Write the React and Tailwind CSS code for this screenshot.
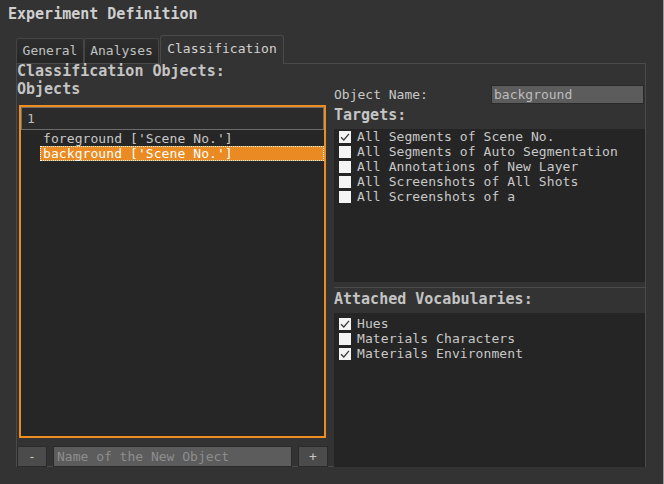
import React, { useState } from "react";

const mono = "font-['DejaVu_Sans_Mono','Liberation_Mono',monospace]";

const targets = [
  { label: "All Segments of Scene No.", checked: true },
  { label: "All Segments of Auto Segmentation", checked: false },
  { label: "All Annotations of New Layer", checked: false },
  { label: "All Screenshots of All Shots", checked: false },
  { label: "All Screenshots of a", checked: false },
];

const vocabularies = [
  { label: "Hues", checked: true },
  { label: "Materials Characters", checked: false },
  { label: "Materials Environment", checked: true },
];

const Check = ({ checked }) => (
  <span className="w-[12px] h-[12px] bg-[#f4f4f4] flex items-center justify-center shrink-0">
    {checked && (
      <svg width="10" height="10" viewBox="0 0 10 10">
        <path d="M1 5.2 L3.8 8 L9 1.8" fill="none" stroke="#3a3a3a" strokeWidth="1.3" />
      </svg>
    )}
  </span>
);

const CheckList = ({ items }) => (
  <div className="flex flex-col">
    {items.map((it) => (
      <div key={it.label} className="h-[15px] flex items-center pl-[5px] gap-[6px] text-[13px] tracking-[0.08px] text-[#c8c8c8]">
        <Check checked={it.checked} />
        <span className="leading-none whitespace-nowrap">{it.label}</span>
      </div>
    ))}
  </div>
);

const App = () => {
  const [tab] = useState("Classification");
  const tabs = [
    { name: "General", w: "w-[68px]" },
    { name: "Analyses", w: "w-[75px]" },
    { name: "Classification", w: "w-[124px]" },
  ];

  return (
    <main className={`w-[664px] h-[484px] bg-[#333333] border-r border-r-[#9a9a9a] flex flex-col overflow-hidden ${mono}`}>
      <div className="h-[28px] flex items-center pl-[8px] text-[15px] font-bold text-[#cfcfcf]">
        Experiment Definition
      </div>

      <div className="ml-[16px] mt-[7px] h-[28px] flex items-end">
        {tabs.map((t) =>
          t.name === tab ? (
            <div
              key={t.name}
              className={`${t.w} ml-[1px] h-[29px] -mb-px bg-[#333333] border border-b-0 border-[#4a4a4a] rounded-t-[3px] flex items-center justify-center pb-[2px] text-[13px] text-[#d2d2d2] z-10`}
            >
              {t.name}
            </div>
          ) : (
            <div
              key={t.name}
              className={`${t.w} h-[25px] bg-gradient-to-b from-[#2e2e2e] to-[#252525] border border-b-0 border-[#454545] rounded-t-[2px] flex items-center justify-center text-[13px] text-[#c0c0c0]`}
            >
              {t.name}
            </div>
          )
        )}
      </div>

      <section className="ml-[16px] w-[630px] h-[404px] border border-[#4a4a4a] flex flex-col">
        <div className="h-[15px] flex items-center text-[15px] font-bold text-[#c4c4c4]">
          Classification Objects:
        </div>

        <div className="flex flex-1 gap-[5px]">
          <div className="w-[311px] flex flex-col">
            <div className="h-[20px] flex items-center text-[15px] font-bold text-[#c4c4c4]">Objects</div>
            <div className="ml-[2px] mt-[6px] w-[307px] h-[333px] border-2 border-[#ee8d1f] bg-[#262626] flex flex-col">
              <input
                readOnly
                value="1"
                className="h-[23px] w-full bg-[#2b2b2b] border border-[#6c6c6c] px-[5px] text-[13px] text-[#bdbdbd] outline-none"
              />
              <div className="mt-[1px] h-[15px] flex items-center ml-[19px] pl-[3px] text-[13px] tracking-[0.08px] text-[#c8c8c8]">
                foreground ['Scene No.']
              </div>
              <div className="h-[15px] flex items-center ml-[19px] pl-[2px] bg-[#e98a22] border border-dotted border-white text-[13px] tracking-[0.08px] text-white">
                background ['Scene No.']
              </div>
            </div>
            <div className="mt-[8px] h-[21px] flex gap-[6px]">
              <button className="w-[30px] h-full bg-[#4b4b4b] border border-[#2a2a2a] text-[13px] text-[#c8c8c8] flex items-center justify-center">
                -
              </button>
              <input
                placeholder="Name of the New Object"
                className="w-[239px] h-full bg-[#5c5c5c] border border-[#2a2a2a] px-[3px] text-[13px] text-[#c8c8c8] placeholder:text-[#8e8e8e] outline-none"
              />
              <button className="w-[30px] h-full bg-[#4b4b4b] border border-[#2a2a2a] text-[13px] text-[#c8c8c8] flex items-center justify-center">
                +
              </button>
            </div>
          </div>

          <div className="flex-1 flex flex-col pl-[1px]">
            <div className="mt-[6px] h-[19px] flex items-center justify-between pr-[1px]">
              <span className="text-[13px] text-[#c8c8c8]">Object Name:</span>
              <input
                readOnly
                value="background"
                className="w-[153px] h-full bg-[#5c5c5c] border border-[#2a2a2a] px-[2px] text-[13px] text-[#bcbcbc] outline-none"
              />
            </div>
            <div className="h-[22px] flex items-center text-[15px] font-bold text-[#c4c4c4]">Targets:</div>
            <div className="mt-[3px] h-[153px] bg-[#252525]">
              <CheckList items={targets} />
            </div>
            <div className="mt-[5px] h-px bg-[#4a4a4a]" />
            <div className="h-[22px] flex items-center text-[15px] font-bold text-[#c4c4c4]">
              Attached Vocabularies:
            </div>
            <div className="mt-[3px] flex-1 bg-[#252525] pt-[3px]">
              <CheckList items={vocabularies} />
            </div>
          </div>
        </div>
      </section>
    </main>
  );
};

export default App;
